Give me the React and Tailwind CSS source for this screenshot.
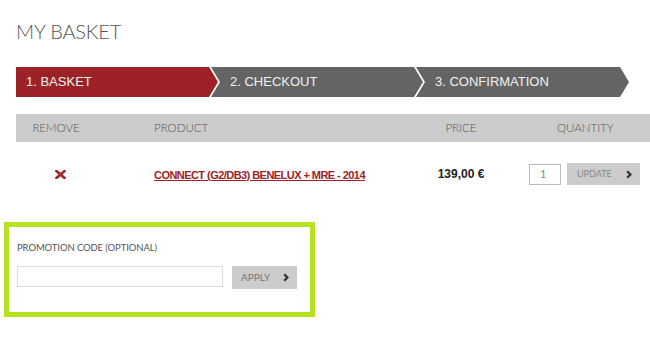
import React from "react";

const Chevron = () => (
  <svg width="6" height="9" viewBox="0 0 6 9" className="block">
    <polyline points="1.2,1.2 4.4,4.5 1.2,7.8" fill="none" stroke="#333" strokeWidth="2.3" />
  </svg>
);

export default function App() {
  return (
    <div className="w-[650px] h-[347px] bg-white overflow-hidden relative" style={{ fontFamily: "Lato, 'Liberation Sans', sans-serif" }}>
      <div className="pl-[16px]">
        <h1 className="pt-[19px] text-[20px] leading-[24px] font-light text-[#555] tracking-[-0.2px]">MY BASKET</h1>

        <div className="mt-[24px] flex h-[30px] text-[13px] text-[#f2f2f2]" style={{ fontFamily: "'Liberation Sans', Arial, sans-serif" }}>
          <div className="w-[202px] h-full bg-[#9c2227] flex items-center pl-[10px] [clip-path:polygon(0_0,calc(100%-9px)_0,100%_50%,calc(100%-9px)_100%,0_100%)]">
            1. BASKET
          </div>
          <div className="w-[212px] -ml-[7px] h-full bg-[#646464] flex items-center pl-[19px] [clip-path:polygon(0_0,calc(100%-9px)_0,100%_50%,calc(100%-9px)_100%,0_100%,9px_50%)]">
            2. CHECKOUT
          </div>
          <div className="w-[213px] -ml-[7px] h-full bg-[#646464] flex items-center pl-[19px] [clip-path:polygon(0_0,calc(100%-9px)_0,100%_50%,calc(100%-9px)_100%,0_100%,9px_50%)]">
            3. CONFIRMATION
          </div>
        </div>

        <div className="mt-[17px] flex h-[28px] items-center bg-[#cccccc] text-[11.5px] text-[#555] font-light">
          <div className="w-[80px] text-center">REMOVE</div>
          <div className="w-[315px] pl-[58px]">PRODUCT</div>
          <div className="w-[100px] text-center">PRICE</div>
          <div className="flex-1 pl-[46px]">QUANTITY</div>
        </div>

        <div className="flex h-[64px] items-center">
          <div className="w-[80px] flex justify-center pl-[8px]">
            <svg width="11" height="9" viewBox="0 0 11 9" className="block">
              <path d="M1.5 1 L9.5 8 M9.5 1 L1.5 8" stroke="#a3232a" strokeWidth="2.6" strokeLinecap="square" />
            </svg>
          </div>
          <div className="w-[315px] pl-[58px] -mt-[2px]">
            <a className="text-[11px] font-bold text-[#9c2227] underline tracking-[-0.55px]" style={{ fontFamily: "'Liberation Sans', Arial, sans-serif" }}>
              CONNECT (G2/DB3) BENELUX + MRE - 2014
            </a>
          </div>
          <div className="w-[100px] text-center text-[12px] font-bold text-[#222]" style={{ fontFamily: "'Liberation Sans', Arial, sans-serif" }}>
            139,00 €
          </div>
          <div className="flex-1 flex items-center pl-[18px] gap-[6px]">
            <div className="w-[32px] h-[21px] border border-[#bbb] text-[11px] text-[#888] flex items-center pl-[10px]">1</div>
            <div className="w-[73px] h-[22px] bg-[#cccccc] flex items-center pl-[10px] pr-[8px] justify-between text-[9px] text-[#888]">
              <span>UPDATE</span>
              <Chevron />
            </div>
          </div>
        </div>
      </div>

      <div className="mt-[16px] ml-[4px] w-[311px] h-[95px] border-[5px] border-[#b8e221] pl-[8px] pt-[15px]">
        <div className="text-[9.5px] leading-[12px] text-[#555] tracking-[-0.1px]">PROMOTION CODE (OPTIONAL)</div>
        <div className="mt-[12px] flex items-start gap-[9px]">
          <div className="w-[206px] h-[21px] border border-[#dddddd]" />
          <div className="w-[65px] h-[23px] bg-[#cccccc] flex items-center justify-between pl-[9px] pr-[8px] text-[10px] text-[#777]">
            <span>APPLY</span>
            <Chevron />
          </div>
        </div>
      </div>
    </div>
  );
}
